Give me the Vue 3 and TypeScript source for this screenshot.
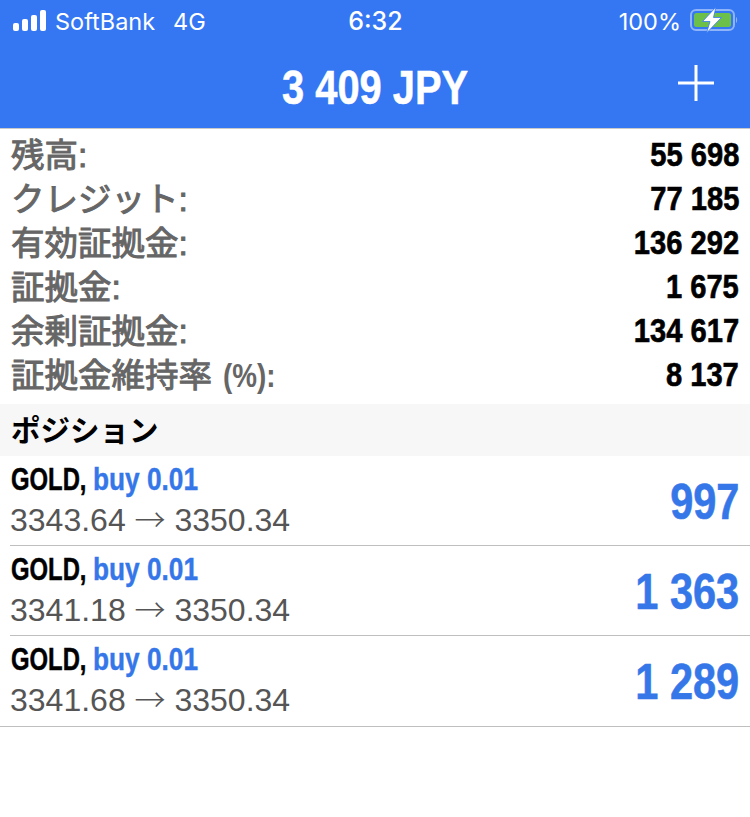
<script setup lang="ts">
interface Stat { label: string; unit?: string; value: string }
interface Position { open: string; pnl: string }
const stats: Stat[] = [
  { label: '残高:', value: '55 698' },
  { label: 'クレジット:', value: '77 185' },
  { label: '有効証拠金:', value: '136 292' },
  { label: '証拠金:', value: '1 675' },
  { label: '余剰証拠金:', value: '134 617' },
  { label: '証拠金維持率', unit: '(%):', value: '8 137' },
]
const positions: Position[] = [
  { open: '3343.64', pnl: '997' },
  { open: '3341.18', pnl: '1 363' },
  { open: '3341.68', pnl: '1 289' },
]
</script>

<template>
  <div class="page">
    <header class="top">
      <div class="status">
        <div class="status-left">
          <svg class="signal" width="34" height="21" viewBox="0 0 34 21">
            <rect x="0" y="13" width="6" height="8" rx="2" fill="#fff" />
            <rect x="9" y="9" width="6" height="12" rx="2" fill="#fff" />
            <rect x="18" y="5" width="6" height="16" rx="2" fill="#fff" />
            <rect x="27" y="0" width="6" height="21" rx="2" fill="#fff" />
          </svg>
          <span class="carrier">SoftBank</span>
          <span class="net">4G</span>
        </div>
        <span class="clock">6:32</span>
        <div class="status-right">
          <span class="pct">100%</span>
          <svg class="battery" width="48" height="26" viewBox="0 0 48 26">
            <rect x="1" y="3" width="43" height="20" rx="5" fill="none" stroke="#8fb4f7" stroke-width="2" />
            <rect x="4" y="6" width="37" height="14" rx="2.5" fill="#6cc04a" />
            <path d="M46 10 C47.5 10.5 47.5 15.5 46 16 Z" fill="#8fb4f7" />
            <path d="M26 0 L12.5 14.5 H20 L16.5 26 L31.5 10.5 H23.5 Z" fill="#fff" stroke="#3577f3" stroke-width="0.8" />
          </svg>
        </div>
      </div>
      <div class="title-bar">
        <h1 class="title">3 409 JPY</h1>
        <svg class="plus" width="36" height="36" viewBox="0 0 36 36">
          <path d="M18 0 V36 M0 18 H36" stroke="#fff" stroke-width="3" fill="none" />
        </svg>
      </div>
    </header>

    <section class="stats">
      <div v-for="s in stats" :key="s.label" class="stat">
        <span class="stat-label">{{ s.label }}<span v-if="s.unit" class="unit">{{ s.unit }}</span></span>
        <span class="stat-value">{{ s.value }}</span>
      </div>
    </section>

    <div class="section-head">ポジション</div>

    <div v-for="p in positions" :key="p.open" class="pos">
      <div class="pos-main">
        <div class="pos-title"><span class="sym">GOLD,</span><span class="side">buy 0.01</span></div>
        <div class="pos-price">{{ p.open }} <span class="arrow">→</span> 3350.34</div>
      </div>
      <div class="pnl">{{ p.pnl }}</div>
    </div>
  </div>
</template>

<style>
html, body { margin: 0; background: #fff; }
</style>

<style scoped>
.page {
  width: 750px;
  height: 817px;
  overflow: hidden;
  background: #fff;
  font-family: "Liberation Sans", "Noto Sans CJK JP", sans-serif;
}
.top {
  background: #3577f3;
  height: 129px;
  display: flex;
  flex-direction: column;
  color: #fff;
  box-sizing: border-box;
  border-bottom: 1px solid #c9c9c9;
}
.status {
  height: 42px;
  padding: 0 12px 0 13px;
  display: grid;
  grid-template-columns: 1fr auto 1fr;
  align-items: center;
  font-family: Inter, "Liberation Sans", sans-serif;
  font-size: 23.5px;
  font-weight: 400;
}
.status-left { display: flex; align-items: center; }
.signal { margin-right: 8px; margin-top: -2px; }
.net { margin-left: 18px; }
.clock { font-size: 25px; font-weight: 500; }
.status-right { display: flex; align-items: center; justify-content: flex-end; gap: 9px; }
.pct { font-size: 23.5px; }
.battery { margin-top: -3px; }
.title-bar { flex: 1; position: relative; display: flex; align-items: center; justify-content: center; }
.title {
  margin: 0;
  font-size: 48px;
  font-weight: 700;
  line-height: 1;
  position: relative;
  top: 3px;
  white-space: nowrap;
  transform: scaleX(0.83);
  -webkit-text-stroke: 0.5px #fff;
}
.plus { position: absolute; right: 36px; top: 23px; }
.stats { padding: 4px 11px 7px; }
.stat { height: 44px; display: flex; justify-content: space-between; align-items: center; }
.stat-label {
  font-size: 33.5px;
  font-weight: 400;
  color: #666;
  -webkit-text-stroke: 1px #666;
  line-height: 38px;
  white-space: nowrap;
  position: relative;
  top: 1px;
}
.unit {
  display: inline-block;
  margin-left: 11px;
  font-weight: 700;
  -webkit-text-stroke: 0;
  transform: scaleX(0.83);
  transform-origin: left center;
}
.stat-value {
  display: inline-block;
  font-size: 33.5px;
  font-weight: 700;
  color: #000;
  transform: scaleX(0.87);
  transform-origin: right center;
  -webkit-text-stroke: 0.6px #000;
}
.section-head {
  height: 52px;
  padding: 0 11px 4px;
  box-sizing: border-box;
  display: flex;
  align-items: center;
  background: #f7f7f7;
  color: #000;
  font-size: 29.5px;
  font-weight: 700;
}
.pos {
  height: 90px;
  box-sizing: border-box;
  margin-left: 10px;
  padding-right: 11px;
  border-bottom: 1px solid #bfbfbf;
  display: flex;
  justify-content: space-between;
  align-items: center;
}
.pos:last-child { margin-left: 0; padding-left: 10px; padding-bottom: 1px; height: 91px; }
.pos-title {
  display: flex;
  font-size: 32px;
  font-weight: 700;
  line-height: 36px;
  margin-bottom: 2px;
  color: #000;
  white-space: nowrap;
  padding-left: 1px;
}
.sym {
  flex: none;
  width: 82px;
  transform: scaleX(0.745);
  transform-origin: left center;
  -webkit-text-stroke: 0.5px #000;
}
.side {
  flex: none;
  color: #3577e8;
  transform: scaleX(0.82);
  transform-origin: left center;
  -webkit-text-stroke: 0.4px #3577e8;
}
.pos-price { font-size: 32px; line-height: 42px; color: #555; }
.arrow { font-family: "Noto Sans CJK JP", sans-serif; font-weight: 300; font-size: 31px; line-height: 0; }
.pnl {
  display: inline-block;
  padding-top: 3px;
  font-size: 50px;
  font-weight: 700;
  color: #3577e8;
  transform: scaleX(0.83);
  transform-origin: right center;
  -webkit-text-stroke: 0.6px #3577e8;
}
</style>
